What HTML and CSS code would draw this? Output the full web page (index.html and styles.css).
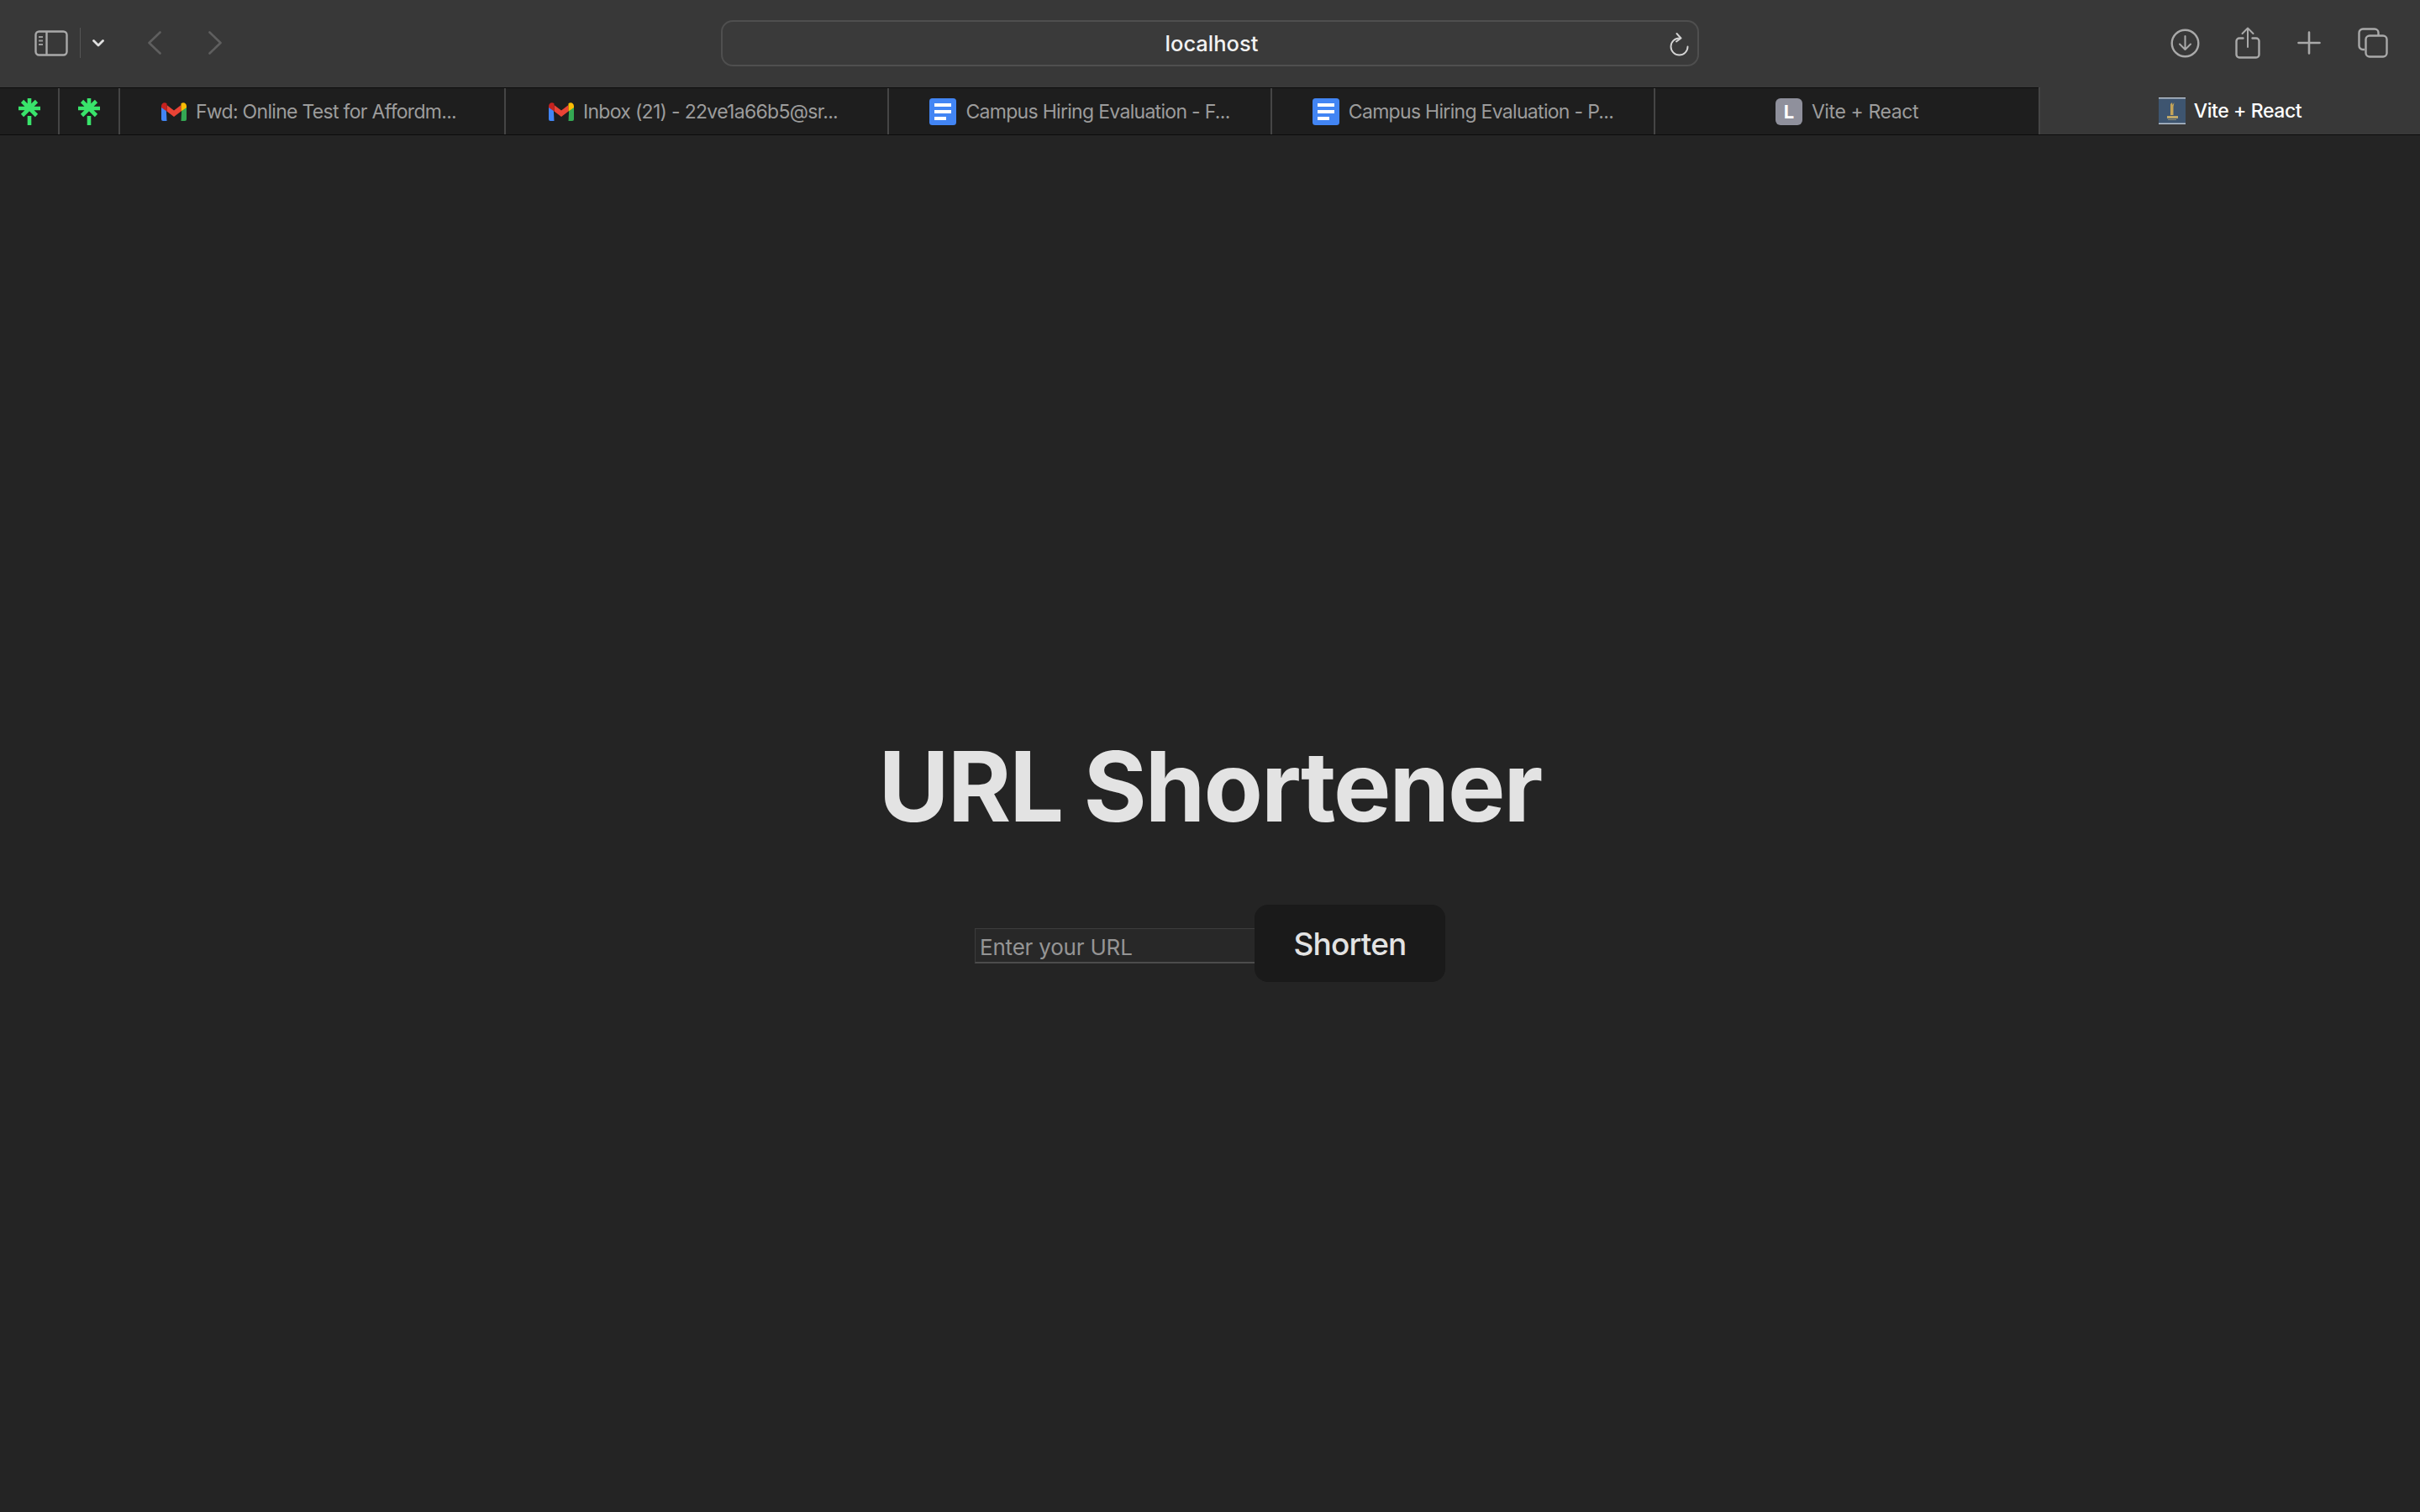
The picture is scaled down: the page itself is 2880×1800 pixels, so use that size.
FILE: index.html
```html
<!DOCTYPE html>
<html lang="en">
<head>
    <meta charset="UTF-8">
    <meta name="viewport" content="width=device-width, initial-scale=1.0">
    <title>Vite + React</title>
    <link rel="stylesheet" href="styles.css">
</head>
<body>

<header class="toolbar">
    <div class="toolbar-left">
        <svg class="icon-sidebar" width="40" height="31" viewBox="0 0 40 31" fill="none" stroke="#a9a9a9" stroke-width="2.4">
            <rect x="1.5" y="1.5" width="37" height="28" rx="4"/>
            <path d="M14.5 1.5v28"/>
            <path d="M5 8h5M5 12.5h5M5 17h5" stroke-width="2" stroke="#9a9a9a"/>
        </svg>
        <span class="toolbar-sep"></span>
        <svg class="icon-chevron" width="14" height="9" viewBox="0 0 14 9" fill="none" stroke="#e0e0e0" stroke-width="2.8" stroke-linecap="round" stroke-linejoin="round">
            <path d="M1.5 1.5 7 7l5.5-5.5"/>
        </svg>
        <svg class="icon-back" width="16" height="28" viewBox="0 0 16 28" fill="none" stroke="#5f5f5f" stroke-width="2.6" stroke-linecap="round" stroke-linejoin="round">
            <path d="M14.5 1.5 1.5 14l13 12.5"/>
        </svg>
        <svg class="icon-forward" width="16" height="28" viewBox="0 0 16 28" fill="none" stroke="#5f5f5f" stroke-width="2.6" stroke-linecap="round" stroke-linejoin="round">
            <path d="M1.5 1.5 14.5 14l-13 12.5"/>
        </svg>
    </div>
    <div class="address-bar">
        <span class="address-text">localhost</span>
        <svg class="icon-reload" width="24" height="28" viewBox="0 0 24 28" fill="none" stroke="#d4d4d4" stroke-width="1.9" stroke-linecap="round" stroke-linejoin="round">
            <path d="M12.5 6.5A10 10 0 1 0 22.5 16.5"/>
            <path d="M9.5 1l5 5.5-5.5 4" />
        </svg>
    </div>
    <div class="toolbar-right">
        <svg width="35" height="35" viewBox="0 0 35 35" fill="none" stroke="#a9a9a9" stroke-width="2.4" stroke-linecap="round" stroke-linejoin="round">
            <circle cx="17.5" cy="17.5" r="15.8"/>
            <path d="M17.5 9v16M11 18.5l6.500 6.500 6.500-6.500" stroke-width="2"/>
        </svg>
        <svg class="icon-share" width="30" height="38" viewBox="0 0 30 38" fill="none" stroke="#a9a9a9" stroke-width="2.400" stroke-linecap="round" stroke-linejoin="round">
            <path d="M9.500 13.500H5a3.500 3.500 0 0 0-3.500 3.500v16A3.500 3.500 0 0 0 5 36.500h20a3.500 3.500 0 0 0 3.500-3.500V17a3.500 3.500 0 0 0-3.500-3.500h-4.500"/>
            <path d="M15 24V2M8.500 8 15 1.500 21.500 8" stroke-width="2"/>
        </svg>
        <svg width="28" height="28" viewBox="0 0 28 28" fill="none" stroke="#a9a9a9" stroke-width="2.600" stroke-linecap="round">
            <path d="M14 1.500v25M1.500 14h25"/>
        </svg>
        <svg width="36" height="36" viewBox="0 0 36 36" fill="none" stroke="#a9a9a9" stroke-width="2.400" stroke-linejoin="round">
            <path d="M8 26H6a4.500 4.500 0 0 1-4.500-4.500V6A4.500 4.500 0 0 1 6 1.500h14A4.500 4.500 0 0 1 24.500 6v3"/>
            <rect x="9.500" y="9.500" width="25" height="25" rx="4.500"/>
        </svg>
    </div>
</header>

<nav class="tabs">
    <div class="tab tab-pinned">
        <svg class="favicon" width="28" height="33" viewBox="0 0 28 33"><use href="#linktree"/></svg>
    </div>
    <div class="tab tab-pinned tab-pinned-2">
        <svg class="favicon" width="28" height="33" viewBox="0 0 28 33"><use href="#linktree"/></svg>
    </div>
    <div class="tab tab-first tab-mail">
        <svg class="favicon" width="30" height="22" viewBox="0 0 30 22"><use href="#gmail"/></svg>
        <span class="tab-title tab-title-cut">Fwd: Online Test for Affordm...</span>
    </div>
    <div class="tab tab-mail">
        <svg class="favicon" width="30" height="22" viewBox="0 0 30 22"><use href="#gmail"/></svg>
        <span class="tab-title tab-title-cut">Inbox (21) - 22ve1a66b5@sr...</span>
    </div>
    <div class="tab">
        <svg class="favicon" width="32" height="32" viewBox="0 0 32 32"><use href="#docs"/></svg>
        <span class="tab-title tab-title-cut">Campus Hiring Evaluation - F...</span>
    </div>
    <div class="tab">
        <svg class="favicon" width="32" height="32" viewBox="0 0 32 32"><use href="#docs"/></svg>
        <span class="tab-title tab-title-cut">Campus Hiring Evaluation - P...</span>
    </div>
    <div class="tab tab-plain">
        <span class="favicon-letter">L</span>
        <span class="tab-title">Vite + React</span>
    </div>
    <div class="tab tab-active">
        <svg class="favicon" width="32" height="32" viewBox="0 0 32 32">
            <rect width="32" height="32" fill="#3e5570"/>
            <rect width="32" height="1.500" fill="#b9c4d0"/>
            <rect y="30.500" width="32" height="1.500" fill="#b9c4d0"/>
            <path d="M14 8l2-2 .5 3 2-3-1 5v10h-3.500z" fill="#c4a458"/>
            <rect x="10" y="22" width="13" height="3" fill="#bfa868"/>
            <rect x="11" y="26" width="10" height="1" fill="#8d8a70"/>
        </svg>
        <span class="tab-title">Vite + React</span>
    </div>
</nav>

<main class="content">
    <h1 class="title">URL Shortener</h1>
    <form class="shorten-form">
        <input class="url-input" type="text" placeholder="Enter your URL">
        <button class="shorten-btn" type="button">Shorten</button>
    </form>
</main>

<!-- favicons used more than once -->
<svg class="defs" width="0" height="0">
    <defs>
        <g id="linktree" fill="none" stroke="#39e46b" stroke-width="4.600">
            <path d="M14 1v12M1 13h26M5.500 4.500 14 13l8.500-8.500M5.500 21.500 14 13l8.500 8.500"/>
            <path d="M14 22v11"/>
        </g>
        <g id="gmail">
            <path d="M0 4.500 5.500 3 6.500 22H2a2 2 0 0 1-2-2z" fill="#4285f4"/>
            <path d="M30 4.500 24.500 3 23.500 22H28a2 2 0 0 0 2-2z" fill="#34a853"/>
            <path d="M6.500 3 15 9.500 23.500 3v7.500L15 17 6.500 10.500z" fill="#ea4335"/>
            <path d="M0 4.500C0 1 3.500-1 6.500 1.200V10.500L0 6z" fill="#c5221f"/>
            <path d="M30 4.500C30 1 26.500-1 23.500 1.200V10.500L30 6z" fill="#fbbc04"/>
        </g>
        <g id="docs">
            <rect width="32" height="32" rx="3.500" fill="#4285f4"/>
            <rect x="6" y="6" width="20" height="4" fill="#fff"/>
            <rect x="6" y="14" width="20" height="4" fill="#fff"/>
            <rect x="6" y="22" width="14" height="4" fill="#fff"/>
        </g>
    </defs>
</svg>

</body>
</html>
```

FILE: styles.css
```css
* {
    box-sizing: border-box;
}
html, body {
    height: 100%;
}
body {
    margin: 0;
    display: flex;
    flex-direction: column;
    background-color: #242424;
    font-family: Inter, "Liberation Sans", sans-serif;
}
.defs {
    display: none;
}

/* top bar */
.toolbar {
    height: 104px;
    flex-shrink: 0;
    display: flex;
    align-items: center;
    background-color: #383838;
    padding-bottom: 2px;
}
.toolbar-left {
    width: 858px;
    display: flex;
    align-items: center;
    padding-left: 41px;
}
.toolbar-sep {
    width: 1px;
    height: 36px;
    margin-left: 14px;
    background-color: #555;
}
.icon-chevron {
    margin-left: 14px;
}
.icon-back {
    margin-left: 52px;
}
.icon-forward {
    margin-left: 56px;
}
.address-bar {
    width: 1164px;
    height: 55px;
    display: flex;
    align-items: center;
    justify-content: center;
    position: relative;
    padding-left: 4px;
    border: 2px solid #4f4f4f;
    border-radius: 14px;
    background-color: #3a3a3a;
}
.address-text {
    font-size: 25.5px;
    font-weight: 500;
    color: #f2f2f2;
}
.icon-reload {
    position: absolute;
    right: 10px;
    top: 13px;
}
.toolbar-right {
    flex: 1;
    display: flex;
    align-items: center;
    padding-left: 561px;
    gap: 44px;
}
.icon-share {
    margin-left: -2px;
}

/* tab strip */
.tabs {
    height: 57px;
    flex-shrink: 0;
    display: flex;
    background-color: #1e1e1e;
    border-top: 1px solid #0d0d0d;
    border-bottom: 1px solid #0d0d0d;
}
.tab {
    width: 456px;
    display: flex;
    align-items: center;
    justify-content: center;
    gap: 11px;
    border-right: 2px solid #454545;
}
.tab-pinned {
    width: 71px;
}
.tab-pinned-2 {
    width: 72px;
}
.tab-first {
    width: 459px;
}
.tab-mail {
    padding-right: 8px;
}
.tab-title {
    font-size: 23px;
    letter-spacing: -0.4px;
    color: #9c9c9c;
    white-space: nowrap;
}
.tab-title-cut {
    letter-spacing: -0.7px;
}
.tab-plain {
    border-right: 0;
}
.tab-active {
    width: 454px;
    margin-top: -1px;
    gap: 10px;
    background-color: #383838;
    border-right: 0;
    border-left: 2px solid #454545;
}
.tab-active .tab-title {
    font-weight: 500;
    color: #fff;
}
.favicon {
    flex-shrink: 0;
}
.favicon-letter {
    width: 32px;
    height: 32px;
    display: flex;
    align-items: center;
    justify-content: center;
    border-radius: 6px;
    background-color: #8f909c;
    color: #fff;
    font-size: 22px;
    font-weight: 700;
}

/* page */
.content {
    flex: 1;
    display: flex;
    flex-direction: column;
    align-items: center;
    padding-top: 706px;
}
.title {
    margin: 0;
    font-size: 115px;
    font-weight: 700;
    letter-spacing: -2px;
    line-height: 139px;
    color: #e3e3e3;
}
.shorten-form {
    display: flex;
    align-items: center;
    margin-top: 71px;
}
.url-input {
    width: 333px;
    height: 42px;
    padding: 4px 5px 0;
    margin-top: 5px;
    border: 0;
    border-top: 1px solid #3c3c3c;
    border-left: 1px solid #3c3c3c;
    border-bottom: 2px solid #4c4c4c;
    background-color: #282828;
    font-family: inherit;
    font-size: 26px;
    letter-spacing: -0.2px;
    color: #e3e3e3;
    outline: none;
}
.url-input::placeholder {
    color: #959595;
}
.shorten-btn {
    width: 227px;
    height: 92px;
    border: 0;
    border-radius: 16px;
    background-color: #1a1a1a;
    font-family: inherit;
    font-size: 37px;
    font-weight: 500;
    letter-spacing: -0.8px;
    color: #e3e3e3;
}
```
